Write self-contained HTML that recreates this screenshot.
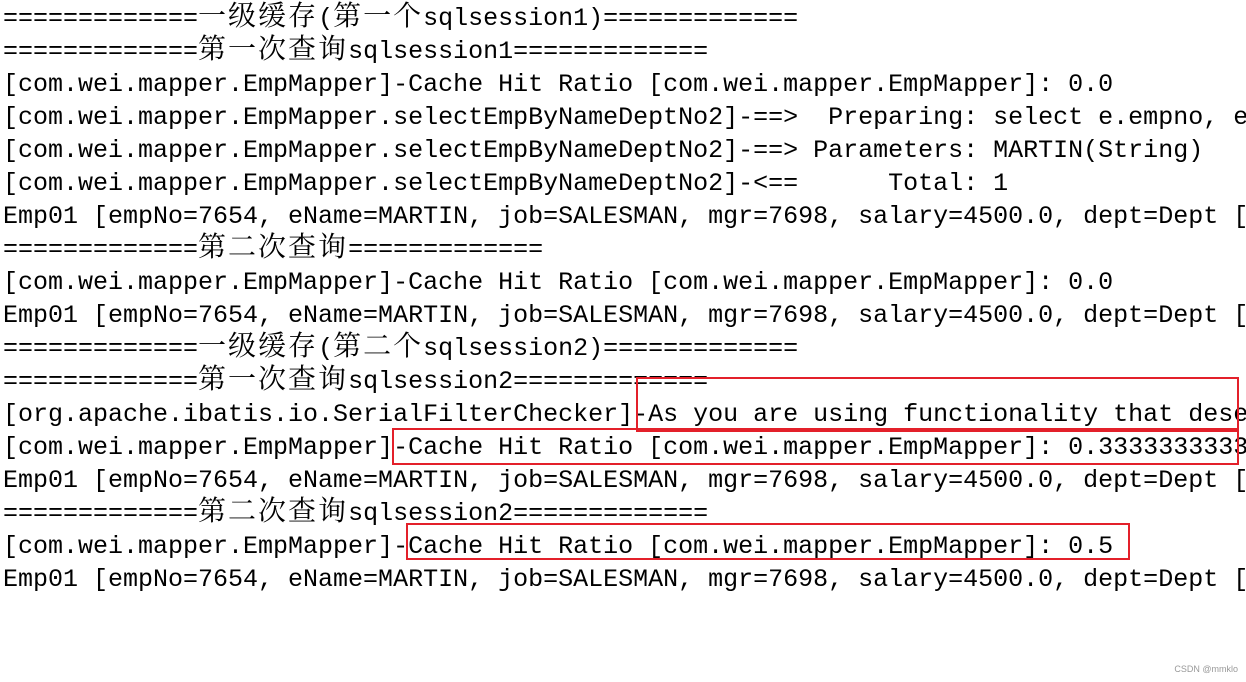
<html><head><style>
body{margin:0;background:#fff;width:1246px;height:682px;overflow:hidden;position:relative}
.t{position:absolute;left:3px;top:2px;font-family:"Liberation Mono",monospace;font-size:25px;color:#000}
.t div{height:33px;line-height:33px;white-space:pre}
.c{font-family:"Noto Serif CJK SC","Noto Sans CJK SC",serif;font-size:28px;letter-spacing:2px;line-height:20px}
.b{position:absolute;border:2px solid #e3202a}
.w{position:absolute;right:8px;bottom:8px;font:9px "Liberation Sans",sans-serif;color:#999}
</style></head><body>
<div class="t"><div>=============<span class="c">一级缓存</span>(<span class="c">第一个</span>sqlsession1)=============</div><div>=============<span class="c">第一次查询</span>sqlsession1=============</div><div>[com.wei.mapper.EmpMapper]-Cache Hit Ratio [com.wei.mapper.EmpMapper]: 0.0</div><div>[com.wei.mapper.EmpMapper.selectEmpByNameDeptNo2]-==>  Preparing: select e.empno, e</div><div>[com.wei.mapper.EmpMapper.selectEmpByNameDeptNo2]-==> Parameters: MARTIN(String)</div><div>[com.wei.mapper.EmpMapper.selectEmpByNameDeptNo2]-&lt;==      Total: 1</div><div>Emp01 [empNo=7654, eName=MARTIN, job=SALESMAN, mgr=7698, salary=4500.0, dept=Dept [</div><div>=============<span class="c">第二次查询</span>=============</div><div>[com.wei.mapper.EmpMapper]-Cache Hit Ratio [com.wei.mapper.EmpMapper]: 0.0</div><div>Emp01 [empNo=7654, eName=MARTIN, job=SALESMAN, mgr=7698, salary=4500.0, dept=Dept [</div><div>=============<span class="c">一级缓存</span>(<span class="c">第二个</span>sqlsession2)=============</div><div>=============<span class="c">第一次查询</span>sqlsession2=============</div><div>[org.apache.ibatis.io.SerialFilterChecker]-As you are using functionality that dese</div><div>[com.wei.mapper.EmpMapper]-Cache Hit Ratio [com.wei.mapper.EmpMapper]: 0.3333333333</div><div>Emp01 [empNo=7654, eName=MARTIN, job=SALESMAN, mgr=7698, salary=4500.0, dept=Dept [</div><div>=============<span class="c">第二次查询</span>sqlsession2=============</div><div>[com.wei.mapper.EmpMapper]-Cache Hit Ratio [com.wei.mapper.EmpMapper]: 0.5</div><div>Emp01 [empNo=7654, eName=MARTIN, job=SALESMAN, mgr=7698, salary=4500.0, dept=Dept [</div></div>
<div class="b" style="left:636px;top:377px;width:599px;height:51px"></div>
<div class="b" style="left:392px;top:428px;width:843px;height:33px"></div>
<div class="b" style="left:406px;top:523px;width:720px;height:33px"></div>
<div class="w">CSDN @mmklo</div>
</body></html>
